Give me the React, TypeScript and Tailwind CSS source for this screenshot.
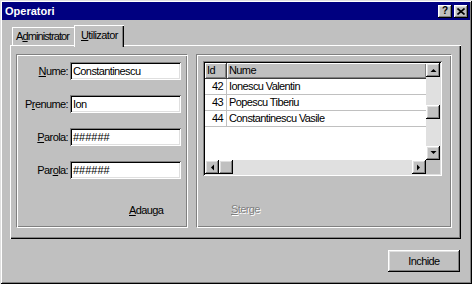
import React from 'react';

const raised =
  'bg-[#c0c0c0] shadow-[inset_-1px_-1px_0_#000,inset_1px_1px_0_#fff,inset_-2px_-2px_0_#808080,inset_2px_2px_0_#dfdfdf]';

const Arrow: React.FC<{ dir: 'up' | 'down' | 'left' | 'right' }> = ({ dir }) => {
  const pts: Record<string, string> = {
    up: '0.5,4 3.5,1 6.5,4',
    down: '0.5,0 3.5,3 6.5,0',
    left: '4,0.5 1,3.5 4,6.5',
    right: '0,0.5 3,3.5 0,6.5',
  };
  const vertical = dir === 'up' || dir === 'down';
  return (
    <div className={`w-[14px] h-[14px] flex items-center justify-center ${raised}`}>
      <svg width={vertical ? 7 : 4} height={vertical ? 4 : 7} viewBox={vertical ? '0 0 7 4' : '0 0 4 7'}>
        <polygon points={pts[dir]} fill="#000" />
      </svg>
    </div>
  );
};

const Field: React.FC<{ label: React.ReactNode; value: string; mono?: boolean }> = ({ label, value, mono }) => (
  <div className="flex items-center justify-end h-[18px]">
    <span className="pr-[2px] leading-none">{label}</span>
    <div className="w-[111px] h-[18px] bg-white flex items-center pl-[3px] shadow-[inset_1px_1px_0_#808080,inset_-1px_-1px_0_#fff,inset_2px_2px_0_#000,inset_-2px_-2px_0_#dfdfdf]">
      <span className={`leading-none ${mono ? 'tracking-normal' : ''}`}>{value}</span>
    </div>
  </div>
);

const rows = [
  { id: 42, nume: 'Ionescu Valentin' },
  { id: 43, nume: 'Popescu Tiberiu' },
  { id: 44, nume: 'Constantinescu Vasile' },
];

export default function App() {
  return (
    <div className="w-[472px] h-[284px] bg-[#c0c0c0] p-[2px] flex flex-col font-['Liberation_Sans',Arial,sans-serif] text-[11px] tracking-[-0.6px] text-black shadow-[inset_1px_1px_0_#dfdfdf,inset_-1px_-1px_0_#000,inset_2px_2px_0_#fff,inset_-2px_-2px_0_#808080]">
      {/* title bar */}
      <div className="h-[18px] bg-[#000080] flex items-center justify-between pl-[3px] pr-[2px]">
        <span className="text-white font-bold tracking-normal leading-none">Operatori</span>
        <div className="flex gap-[2px]">
          <div className={`w-[14px] h-[13px] flex items-center justify-center ${raised}`}>
            <span className="font-bold text-[10px] leading-none tracking-normal">?</span>
          </div>
          <div className={`w-[14px] h-[13px] flex items-center justify-center ${raised}`}>
            <svg width="8" height="7" viewBox="0 0 8 7">
              <path d="M0.5 0.5 L7.5 6.5 M7.5 0.5 L0.5 6.5" stroke="#000" strokeWidth="1.6" />
            </svg>
          </div>
        </div>
      </div>

      <div className="pl-[8px] mt-[5px] flex flex-col">
        {/* tabs */}
        <div className="h-[20px] flex items-end relative z-10">
          <div className="ml-[2px] w-[64px] h-[18px] flex items-center pl-[4px] shadow-[inset_1px_1px_0_#fff,inset_-1px_0_0_#000]">
            <span className="leading-none tracking-[-0.9px]">
              A<span className="underline">d</span>ministrator
            </span>
          </div>
          <div className="-ml-[2px] w-[50px] h-[22px] -mb-[2px] pb-[2px] flex items-center pl-[7px] bg-[#c0c0c0] shadow-[inset_1px_1px_0_#fff,inset_-1px_0_0_#000,inset_-2px_0_0_#808080]">
            <span className="leading-none">
              <span className="underline">U</span>tilizator
            </span>
          </div>
        </div>

        {/* tab page */}
        <div className="w-[451px] h-[194px] flex gap-[8px] pt-[9px] pl-[6px] shadow-[inset_1px_1px_0_#fff,inset_-1px_-1px_0_#000,inset_-2px_-2px_0_#808080]">
          {/* left group */}
          <div className="w-[172px] h-[174px] border border-t-[#808080] border-l-[#808080] border-r-white border-b-white shadow-[inset_1px_1px_0_#fff,inset_-1px_-1px_0_#808080] flex flex-col pt-[7px] pr-[6px]">
            <div className="flex flex-col gap-[15px]">
              <Field label={<><span className="underline">N</span>ume:</>} value="Constantinescu" />
              <Field label={<>P<span className="underline">r</span>enume:</>} value="Ion" />
              <Field label={<><span className="underline">P</span>arola:</>} value="######" mono />
              <Field label={<>Par<span className="underline">o</span>la:</>} value="######" mono />
            </div>
            <div className="mt-[25px] pl-[112px] leading-[13px]">
              <span className="underline">A</span>dauga
            </div>
          </div>

          {/* right group */}
          <div className="w-[256px] h-[174px] border border-t-[#808080] border-l-[#808080] border-r-white border-b-white shadow-[inset_1px_1px_0_#fff,inset_-1px_-1px_0_#808080] flex flex-col pt-[6px] pl-[6px]">
            <div className="w-[239px] h-[115px] p-[2px] shadow-[inset_1px_1px_0_#808080,inset_-1px_-1px_0_#fff,inset_2px_2px_0_#000,inset_-2px_-2px_0_#dfdfdf]">
              <div className="flex h-[97px]">
                <div className="w-[221px] bg-white flex flex-col">
                  <div className="h-[16px] flex bg-[#c0c0c0]">
                    <div className="w-[22px] flex items-center pl-[2px] border-r border-b border-[#404040] shadow-[inset_1px_1px_0_#fff,inset_-1px_-1px_0_#808080]">
                      <span className="leading-none">Id</span>
                    </div>
                    <div className="flex-1 flex items-center pl-[2px] border-b border-[#404040] shadow-[inset_1px_1px_0_#fff,inset_-1px_-1px_0_#808080]">
                      <span className="leading-none">Nume</span>
                    </div>
                  </div>
                  {rows.map((r) => (
                    <div key={r.id} className="h-[16px] flex">
                      <div className="w-[22px] flex items-center justify-end pr-[3px] border-r border-b border-[#c0c0c0]">
                        <span className="leading-none">{r.id}</span>
                      </div>
                      <div className="flex-1 flex items-center pl-[2px] border-b border-[#c0c0c0]">
                        <span className="leading-none">{r.nume}</span>
                      </div>
                    </div>
                  ))}
                </div>
                <div className="w-[14px] flex flex-col bg-[#e0e0e0]">
                  <Arrow dir="up" />
                  <div className="flex-1 flex flex-col pt-[28px]">
                    <div className={`w-[14px] h-[14px] ${raised}`} />
                  </div>
                  <Arrow dir="down" />
                </div>
              </div>
              <div className="flex h-[14px]">
                <div className="w-[221px] flex bg-[#e0e0e0]">
                  <Arrow dir="left" />
                  <div className={`w-[14px] h-[14px] ${raised}`} />
                  <div className="flex-1" />
                  <Arrow dir="right" />
                </div>
                <div className="w-[14px] h-[14px] bg-[#c0c0c0]" />
              </div>
            </div>
            <div className="mt-[27px] pl-[28px] leading-[13px] text-[#808080] [text-shadow:1px_1px_0_#fff]">
              <span className="underline">S</span>terge
            </div>
          </div>
        </div>

        {/* bottom button */}
        <div className="w-[451px] mt-[11px] flex justify-end pr-[1px]">
          <div className={`w-[72px] h-[22px] flex items-center justify-center ${raised}`}>
            <span className="leading-none">Inchide</span>
          </div>
        </div>
      </div>
    </div>
  );
}
